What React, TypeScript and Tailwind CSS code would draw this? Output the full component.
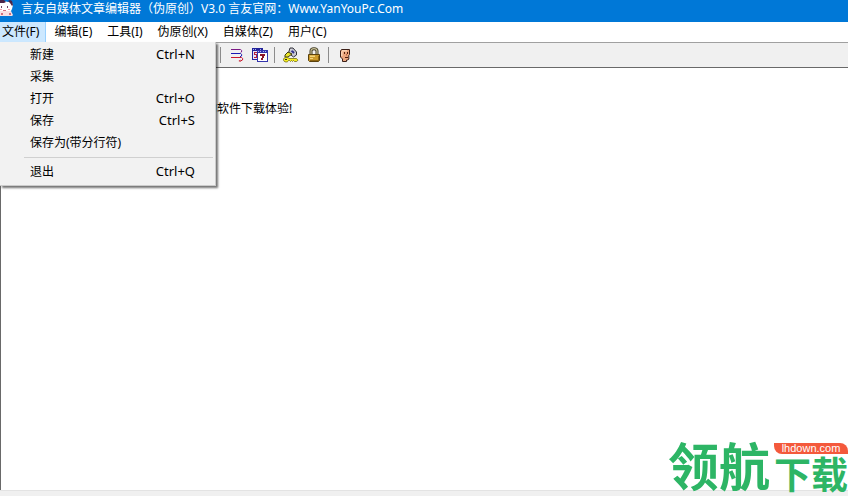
import React from "react";

interface MenuEntry {
  label: string;
  shortcut?: string;
}

const menus = ["文件(F)", "编辑(E)", "工具(I)", "伪原创(X)", "自媒体(Z)", "用户(C)"];

const fileGroups: MenuEntry[][] = [
  [
    { label: "新建", shortcut: "Ctrl+N" },
    { label: "采集" },
    { label: "打开", shortcut: "Ctrl+O" },
    { label: "保存", shortcut: "Ctrl+S" },
    { label: "保存为(带分行符)" },
  ],
  [{ label: "退出", shortcut: "Ctrl+Q" }],
];

const AppIcon = () => (
  <svg viewBox="0 0 13 16" className="h-4 w-[13px] shrink-0">
    <path d="M0 1h4l4 1 3-1 2 4-1 4-1 2H0z" fill="#fff" />
    <path d="M0 0h4l2 2-2 1H0zM8 1l2-1 2 1 1 4-1 1-2-3z" fill="#4a2648" />
    <path d="M1 6h1v2H1zM7 6h1v2H7z" fill="#6d4a66" />
    <path d="M0 9h2v1H0zM8 9h2v1H8z" fill="#f3a0b0" />
    <path d="M0 11h11l2 4-1 1H0z" fill="#f7dfe2" />
    <path d="M3 10h3v1H3zM1 13h2v2H1zM9 13h2v2H9z" fill="#cf6f7e" />
  </svg>
);

const WrapIcon = () => (
  <svg viewBox="0 0 16 16" className="size-4" fill="none">
    <path d="M2 2.500h9.500l1.200 1-.2 1.500-1 .8" stroke="#7b1a86" />
    <path d="M2 6.500h9.500l1.200 1-.2 1.500-1.500.8" stroke="#1a1ab4" />
    <path d="M2 10.500h10.500l1.200 1-.2 1.500-2 1" stroke="#c8182c" />
    <path d="M9.500 14l2-1.500V15z" fill="#c8182c" />
  </svg>
);

const FormsIcon = () => (
  <svg viewBox="0 0 16 16" className="size-4" shapeRendering="crispEdges">
    <path d="M0 1h11v12H0z" fill="#23239a" />
    <path d="M1 4h9v8H1z" fill="#e4e4fa" />
    <path d="M1 2h1v1H1zM3 2h1v1H3zM8 2h1v1H8z" fill="#a9b5f5" />
    <path d="M2 5h3v1H2zM2 6h1v1H2zM2 7h3v1H2zM4 8h1v2H4zM2 10h3v1H2z" fill="#b4203a" />
    <path d="M5 3h11v12H5z" fill="#3434ac" />
    <path d="M6 6h9v8H6z" fill="#fff" />
    <path d="M6 4h1v1H6zM8 4h1v1H8zM11 4h1v1h-1zM13 4h1v1h-1z" fill="#a9b5f5" />
    <path d="M8 7h5v2h-1v2h-1v2H9v-2h1V9H8z" fill="#8c1428" />
  </svg>
);

const KeyIcon = () => (
  <svg viewBox="0 0 16 16" className="size-4">
    <path d="M7 1h3l3.500 4v3l-3 2-5-4z" fill="#c9c9d2" stroke="#33323a" />
    <path d="M8.500 3.500l2.500 2.500" stroke="#30308c" strokeWidth="2" />
    <path d="M8 2.500l1 1" stroke="#fff" />
    <path d="M5 5L2 8v2h3l4-3z" fill="#e9e52b" stroke="#3d3a10" />
    <path
      d="M3 10.500c-2 0-2.500 1-2.500 2.200S1.500 15 3 15s2-.5 2.500-1.500h1l1 1 1-1 1 1 1-1 1 1h2l1.500-1.300-1.500-1.700H6c-.5-.7-1.500-1-3-1z"
      fill="#f6ef22"
      stroke="#5e590b"
      strokeWidth=".7"
    />
    <path d="M2 12h2v1H2z" fill="#222" />
  </svg>
);

const LockIcon = () => (
  <svg viewBox="0 0 16 16" className="size-4">
    <path d="M5 8V4c0-1.500 1-2.300 3-2.300S11 2.500 11 4v4" fill="none" stroke="#3d3820" strokeWidth="3" />
    <path d="M5 8V4c0-1.500 1-2.300 3-2.300S11 2.500 11 4v4" fill="none" stroke="#c9c29a" strokeWidth="1.200" />
    <path d="M2.500 7.500h11v6l-1 1h-9l-1-1z" fill="#cb9a2a" stroke="#5a420e" />
    <path d="M4 8.500h5v1.500H4zM4 11h3v1H4z" fill="#f3d67c" />
    <path d="M4 13h9v1H4zM12 9h1v4h-1z" fill="#8f6612" />
  </svg>
);

const FaceIcon = () => (
  <svg viewBox="0 0 16 16" className="size-4">
    <path
      d="M4.500 2.500h8v5l-.7 1V12l-1 1H9.500v1.500h-4V12l-2-2V4z"
      fill="#eba67e"
      stroke="#3c2018"
    />
    <path d="M5 3h5v1.500H5zM4 4.500h1.500V9H4z" fill="#fbd3b4" />
    <path d="M7 5h1v2H7zM10 5h1v2h-1zM8 10h3v1H8z" fill="#54200f" />
    <path d="M9 7h1v1.500H9z" fill="#bd6540" />
  </svg>
);

const toolGroups = [
  [
    { name: "自动换行", icon: <WrapIcon /> },
    { name: "窗口", icon: <FormsIcon /> },
  ],
  [
    { name: "密钥", icon: <KeyIcon /> },
    { name: "锁定", icon: <LockIcon /> },
  ],
  [{ name: "用户", icon: <FaceIcon /> }],
];

const FileMenu = () => (
  <div
    role="menu"
    className="absolute left-0 top-full z-10 w-[216px] border border-t-0 border-l-0 border-[#cccccc] bg-[#f2f2f2] py-0.5 shadow-[2px_2px_2px_rgba(0,0,0,0.55)]"
  >
    {fileGroups.map((group, i) => (
      <React.Fragment key={i}>
        {i > 0 && <hr className="my-[3px] mr-0.5 ml-6 border-[#d0d0d0]" />}
        {group.map((entry) => (
          <button
            key={entry.label}
            role="menuitem"
            className="flex h-[22px] w-full items-center justify-between pr-5 pl-[30px] hover:bg-[#91c9f7]"
          >
            <span>{entry.label}</span>
            {entry.shortcut && <span className="text-[13px]">{entry.shortcut}</span>}
          </button>
        ))}
      </React.Fragment>
    ))}
  </div>
);

const Watermark = () => (
  <div className="pointer-events-none absolute right-0 bottom-1 flex items-end gap-1 font-['Noto_Sans_CJK_SC',sans-serif] font-bold text-[#2db565]">
    <span className="text-[51px] leading-[56px]">领航</span>
    <div className="flex flex-col">
      <span className="h-[11px] rounded-tr-lg rounded-bl-lg bg-[#f4593c] text-center font-['Liberation_Sans',sans-serif] text-[11px] leading-[11px] font-normal text-white">
        lhdown.com
      </span>
      <span className="text-[37px] leading-[38px] whitespace-nowrap">下载</span>
    </div>
  </div>
);

const App: React.FC = () => {
  return (
    <div className="relative flex min-h-screen flex-col bg-[#f0f0f0] font-['Noto_Sans','Noto_Sans_CJK_SC',sans-serif] text-xs text-black">
      <header className="flex h-[22px] items-start gap-2 bg-[#0078d7] text-white">
        <AppIcon />
        <h1 className="leading-[18px] whitespace-pre">
          言友自媒体文章编辑器（伪原创）V3.0 言友官网：Www.YanYouPc.Com
        </h1>
      </header>

      <nav className="relative flex h-5 gap-px bg-white">
        {menus.map((menu, i) => (
          <button
            key={menu}
            className={
              i === 0
                ? "border-r border-[#99d1ff] bg-[#cce8ff] pr-1.5 pl-0.5"
                : "px-[7px] hover:bg-[#e5f3ff]"
            }
          >
            {menu}
          </button>
        ))}
        <FileMenu />
      </nav>

      <div className="flex h-[26px] items-center border-t border-b border-t-[#a0a0a0] border-b-[#696969] pl-[220px]">
        {toolGroups.map((group, i) => (
          <div key={i} className="flex gap-[7px] border-l border-[#8c8c8c] pr-1.5 pl-2">
            {group.map((tool) => (
              <button key={tool.name} aria-label={tool.name}>
                {tool.icon}
              </button>
            ))}
          </div>
        ))}
      </div>

      <textarea
        aria-label="文章内容"
        spellCheck={false}
        defaultValue="的软件下载体验!"
        className="w-full flex-1 resize-none border-l border-[#696969] bg-white pt-8 pl-[204px] leading-[18px] outline-none"
      />
      <footer className="h-1.5 border-t border-[#e3e3e3] bg-[#f0f0f0]" />

      <Watermark />
    </div>
  );
};

export default App;
